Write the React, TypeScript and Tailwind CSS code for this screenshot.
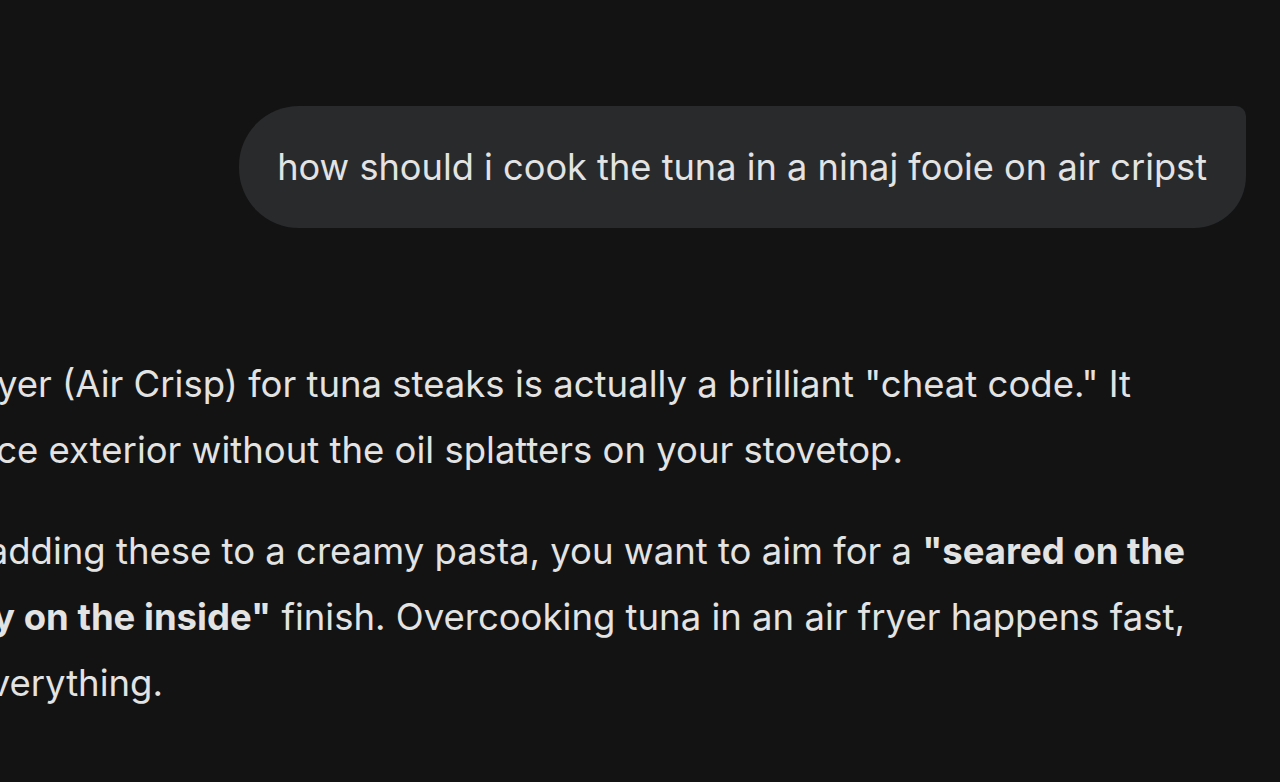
import React from "react";

const Line = ({ pr, children }: { pr: string; children: React.ReactNode }) => (
  <div className={`flex justify-end overflow-hidden whitespace-nowrap h-[66px] leading-[66px] ${pr}`}>
    <span className="shrink-0">{children}</span>
  </div>
);

export default function App() {
  return (
    <div
      className="w-full h-[782px] bg-[#131314] overflow-hidden text-[#e3e3e3]"
      style={{ fontFamily: "Inter, Roboto, 'Noto Sans', sans-serif" }}
    >
      <div className="pt-[106px] flex justify-end pr-[34px]">
        <div className="h-[122px] flex items-center pl-[38px] pr-[39px] bg-[#282a2c] rounded-tl-[60px] rounded-bl-[60px] rounded-tr-[10px] rounded-br-[52px] text-[36.2px] whitespace-nowrap">
          how should i cook the tuna in a ninaj fooie on air cripst
        </div>
      </div>

      <div className="mt-[123px] text-[36.5px]">
        <Line pr="pr-[149px]">
          Using your Ninja Foodi's air fryer (Air Crisp) for tuna steaks is actually a brilliant "cheat code." It
        </Line>
        <Line pr="pr-[377px]">
          gives you a nice exterior without the oil splatters on your stovetop.
        </Line>
        <div className="h-[35px]" />
        <Line pr="pr-[95px]">
          Since you're adding these to a creamy pasta, you want to aim for a <b className="font-bold">"seared on the</b>
        </Line>
        <Line pr="pr-[95px]">
          <b className="font-bold">outside, rosy on the inside"</b> finish. Overcooking tuna in an air fryer happens fast,
        </Line>
        <Line pr="pr-[1117px]">so timing is everything.</Line>
      </div>
    </div>
  );
}
